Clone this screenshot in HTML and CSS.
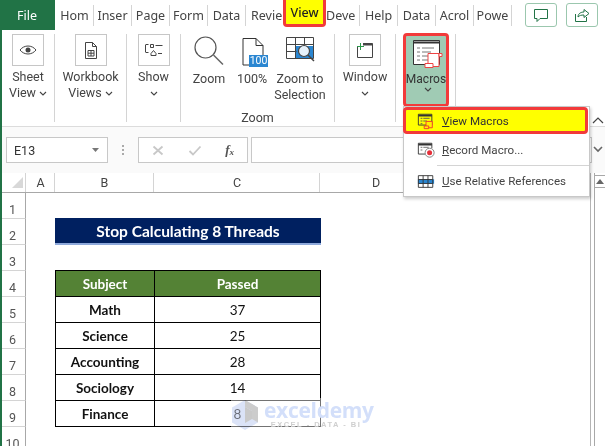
FILE: index.html
```html
<!DOCTYPE html>
<html lang="en">
<head>
<meta charset="utf-8">
<title>Excel View Macros</title>
<link rel="stylesheet" href="styles.css">
</head>
<body>
<svg class="defs" width="0" height="0" aria-hidden="true">
  <symbol id="chev" viewBox="0 0 8 5"><path d="M1 1l3 3 3-3" fill="none" stroke="#444" stroke-width="1.1"/></symbol>
</svg>
<div class="app">
  <header class="tabs">
    <div class="file">File</div>
    <div class="tab">Hom</div>
    <div class="tab">Inser</div>
    <div class="tab">Page</div>
    <div class="tab">Form</div>
    <div class="tab">Data</div>
    <div class="tab tab-clip">Revie</div>
    <div class="tab-view">View</div>
    <div class="tab tab-deve">Deve</div>
    <div class="tab">Help</div>
    <div class="tab">Data</div>
    <div class="tab">Acrol</div>
    <div class="tab tab-last">Powe</div>
    <div class="tab-actions">
      <button class="act"><svg width="16" height="16" viewBox="0 0 16 16"><path d="M1.5 2.5h13v9H7l-3 3v-3H1.5z" fill="none" stroke="#217346"/></svg></button>
      <button class="act"><svg width="18" height="16" viewBox="0 0 18 16"><path d="M2.5 7v7.5h11V10M5 10c0-3.500 3-5 6-5V2.500L16 6.500l-5 4V8c-3 0-4.500.500-6 2z" fill="none" stroke="#217346"/></svg></button>
    </div>
  </header>

  <section class="ribbon">
    <div class="group g-sheet">
      <div class="box"><svg width="18" height="10" viewBox="0 0 18 10"><path d="M1 5c2-2.600 5-4 8-4s6 1.400 8 4c-2 2.600-5 4-8 4S3 7.600 1 5z" fill="none" stroke="#444"/><circle cx="9" cy="5" r="2.500" fill="#444"/></svg></div>
      <div class="lbl">Sheet</div>
      <div class="lbl">View <svg class="chev"><use href="#chev"/></svg></div>
    </div>
    <div class="group g-book">
      <div class="box"><svg width="14" height="17" viewBox="0 0 14 17"><path d="M1.500.500h7l4 4v12h-11zM8.500.500v4h4" fill="none" stroke="#444"/><path d="M4 8.500h6v5.500H4zM7 8.500V14M4 11.200h6" fill="none" stroke="#444"/></svg></div>
      <div class="lbl">Workbook</div>
      <div class="lbl">Views <svg class="chev"><use href="#chev"/></svg></div>
    </div>
    <div class="group g-show">
      <div class="box"><svg width="18" height="12" viewBox="0 0 18 12"><path d="M.5 1v7M.5.500h3M.5 8.500h3M5.500.500h3v3h-3zM10.500 1.500h7M6 9.500l2.500-3 2.500 3v2H6zM13 9.500h4" fill="none" stroke="#444"/></svg></div>
      <div class="lbl">Show</div>
      <div class="lbl"><svg class="chev"><use href="#chev"/></svg></div>
    </div>
    <div class="group g-zoom">
      <div class="zoom-row">
        <div class="zbtn z1">
          <svg class="zicon" width="32" height="34" viewBox="0 0 32 34"><circle cx="12.500" cy="13.500" r="10.500" fill="none" stroke="#555" stroke-width="1.200"/><path d="M20.500 21l9.500 9.500" stroke="#666" stroke-width="1.500"/></svg>
          <div class="lbl">Zoom</div>
        </div>
        <div class="zbtn z2">
          <div class="icon100">
            <svg width="22" height="28" viewBox="0 0 22 28"><path d="M1 .5h13l7 7V27H1z" fill="#fff" stroke="#333"/><path d="M14 .5v7h7" fill="none" stroke="#333"/></svg>
            <span class="badge100">100</span>
          </div>
          <div class="lbl">100%</div>
        </div>
        <div class="zbtn z3">
          <svg class="zicon" width="30" height="34" viewBox="0 0 30 34"><rect x="11" y="12" width="18" height="12" fill="#2a86d1"/><path d="M1.500 3.500h27v21h-27zM1.500 10.500h27M1.500 17.500h10M10.500 3.500v21M19.500 3.500v8" fill="none" stroke="#444"/><circle cx="19" cy="17" r="5.500" fill="#e6f1fa" stroke="#444" stroke-width="1.200"/><path d="M23 21l6 6" stroke="#444" stroke-width="1.500"/></svg>
          <div class="lbl">Zoom to</div>
          <div class="lbl">Selection</div>
        </div>
      </div>
      <div class="glabel">Zoom</div>
    </div>
    <div class="group g-window">
      <div class="box"><svg width="18" height="16" viewBox="0 0 18 16"><path d="M1.500 5v10.500h15V1.500H7" fill="none" stroke="#444"/><path d="M7 2.500h9.500" stroke="#444" stroke-width="2"/><path d="M4.500 1v7M1 4.500h7" stroke="#2c9a4b" fill="none"/></svg></div>
      <div class="lbl">Window</div>
      <div class="lbl"><svg class="chev"><use href="#chev"/></svg></div>
    </div>
    <div class="group g-macros">
      <div class="macros">
        <svg width="31" height="30" viewBox="0 0 31 30"><path d="M1.500 1.500h26v24h-26z" fill="#fff" stroke="#333"/><path d="M1.500 3.500h26" stroke="#333" stroke-width="2"/><path d="M5 9h3M10 9h12M5 13h3M10 13h9M5 17h3M10 17h7M5 21h3M10 21h6" stroke="#777"/><path d="M16 14.500h11v13h-11z" fill="#fff" stroke="#ee4444"/><path d="M27 14.500h3v3h-3zM13 24.500h8v4h-8z" fill="#fff" stroke="#ee4444"/></svg>
        <div class="lbl">Macros</div>
        <div class="lbl"><svg class="chev"><use href="#chev"/></svg></div>
      </div>
    </div>
    <svg class="collapse" width="12" height="7" viewBox="0 0 12 7"><path d="M1 6l5-5 5 5" fill="none" stroke="#444" stroke-width="1.200"/></svg>
  </section>

  <section class="fbar">
    <div class="namebox"><span>E13</span><svg width="8" height="4" viewBox="0 0 8 4"><path d="M0 0h7L3.500 4z" fill="#777"/></svg></div>
    <div class="dots"><i></i><i></i><i></i></div>
    <div class="fxbox">
      <svg width="12" height="11" viewBox="0 0 12 11"><path d="M1.500 1.500l9 8M10.500 1.500l-9 8" stroke="#c8c8c8" stroke-width="1.800"/></svg>
      <svg width="14" height="11" viewBox="0 0 14 11"><path d="M1.500 6l3.500 3.500 7.500-8" fill="none" stroke="#c8c8c8" stroke-width="1.800"/></svg>
      <span class="fx">f<sub>x</sub></span>
    </div>
    <div class="finput"></div>
    <svg class="fchev" width="10" height="7" viewBox="0 0 10 7"><path d="M1 1l4 4 4-4" fill="none" stroke="#666" stroke-width="1.600"/></svg>
  </section>

  <section class="sheet-wrap">
    <div class="sheet">
      <div class="corner"><i></i></div>
      <div class="ch">A</div><div class="ch">B</div><div class="ch">C</div><div class="ch">D</div><div class="ch ch-e"></div>

      <div class="rh rh1">1</div><div class="row-fill"></div>
      <div class="rh">2</div><div></div><div class="title">Stop Calculating 8 Threads</div><div class="tail"></div>
      <div class="rh">3</div><div class="row-fill"></div>
      <div class="rh">4</div><div></div><div class="cell head">Subject</div><div class="cell head">Passed</div><div class="tail"></div>
      <div class="rh">5</div><div></div><div class="cell b">Math</div><div class="cell">37</div><div class="tail"></div>
      <div class="rh">6</div><div></div><div class="cell b">Science</div><div class="cell">25</div><div class="tail"></div>
      <div class="rh">7</div><div></div><div class="cell b">Accounting</div><div class="cell">28</div><div class="tail"></div>
      <div class="rh">8</div><div></div><div class="cell b">Sociology</div><div class="cell">14</div><div class="tail"></div>
      <div class="rh">9</div><div></div><div class="cell b">Finance</div><div class="cell">8</div><div class="tail"></div>
      <div class="rh">10</div><div class="row-fill"></div>
    </div>
    <div class="vscroll">
      <div class="vup"><svg width="8" height="5" viewBox="0 0 8 5"><path d="M4 0l4 5H0z" fill="#666"/></svg></div>
    </div>
    <div class="mark">
      <svg class="mark-logo" width="28" height="32" viewBox="0 0 28 32"><path d="M14 1l13 7.500v15L14 31 1 23.500v-15z" fill="#dbe3f7"/><path d="M14 8l7 4v8l-7 4z" fill="#c9c9c9"/><path d="M14 1l13 7.500v15l-6-3.500v-8l-7-4z" fill="#cccccc"/></svg>
      <div class="mark-text">
        <div class="mark-name">exceldemy</div>
        <div class="mark-sub">EXCEL - DATA - BI</div>
      </div>
    </div>
  </section>

  <nav class="menu">
    <div class="mi mi-on">
      <svg width="20" height="18" viewBox="0 0 20 18"><path d="M1.500 1.500h15v12h-15z" fill="none" stroke="#333"/><path d="M1.500 3h15" stroke="#333" stroke-width="2"/><path d="M4 6h2M7 6h7M4 9h2M7 9h4M4 12h2" stroke="#555"/><path d="M10 9.500h7v7h-7z" fill="#fff200" stroke="#e33"/><path d="M8 14.500h5v3H8z" fill="#fff200" stroke="#e33"/></svg>
      <span><u>V</u>iew Macros</span>
    </div>
    <div class="mi">
      <svg width="20" height="18" viewBox="0 0 20 18"><path d="M9 13.500H1.500v-12h15V7" fill="none" stroke="#333"/><path d="M1.500 3h15" stroke="#333" stroke-width="2"/><path d="M4 6h2M4 9h2M7 6h6" stroke="#666"/><circle cx="14" cy="12" r="5" fill="#fff" stroke="#777"/><circle cx="14" cy="12" r="2.800" fill="#e5303a"/></svg>
      <span><u>R</u>ecord Macro...</span>
    </div>
    <div class="msep"></div>
    <div class="mi">
      <svg width="20" height="15" viewBox="0 0 20 15"><rect x="1" y="5" width="18" height="5" fill="#2a86d1"/><path d="M1.500 1h16v13h-16zM1.500 5.300h16M1.500 9.700h16M6.800 1v13M12.200 1v13" fill="none" stroke="#333"/></svg>
      <span><u>U</u>se Relative References</span>
    </div>
  </nav>
</div>
</body>
</html>
```
FILE: styles.css
```css
* { box-sizing: border-box; }
html, body { margin: 0; padding: 0; }
body { width: 605px; height: 446px; overflow: hidden; background: #fff; font-family: "Roboto", "Noto Sans", sans-serif; color: #444; }
.defs { position: absolute; }
.app { position: relative; width: 605px; height: 446px; overflow: hidden; border-left: 2px solid #217346; display: flex; flex-direction: column; }

.tabs { height: 30px; display: flex; align-items: flex-start; font-family: "Noto Sans", sans-serif; font-size: 12.5px; flex: none; }
.file { width: 53px; height: 30px; margin-right: 1px; background: #217346; color: #fff; display: flex; align-items: center; justify-content: center; padding-right: 3px; }
.tab { width: 38px; height: 21px; margin-top: 5px; line-height: 21px; text-align: center; white-space: nowrap; overflow: hidden; border-right: 1px solid #d4d4d4; }
.tab-clip { width: 37px; border-right: 0; text-align: left; padding-left: 5px; }
.tab-deve { width: 34px; text-align: left; }
.tab-last { width: 38px; }
.tab-view { width: 43px; height: 27px; background: #ff0; border: 3px solid #f23a3a; border-top: 0; border-radius: 0 0 4px 4px; line-height: 26px; text-align: center; color: #222; font-weight: 500; }
.tab-actions { margin-left: 13px; margin-top: 3px; display: flex; gap: 9px; }
.act { width: 32px; height: 24px; padding: 0; background: #fff; border: 1px solid #9bc7ae; border-radius: 3px; display: flex; align-items: center; justify-content: center; }

.ribbon { position: relative; height: 97px; flex: none; padding-top: 4px; display: flex; align-items: flex-start; border-bottom: 1px solid #dcdcdc; font-size: 12.5px; }
.group { height: 88px; border-right: 1px solid #d4d4d4; display: flex; flex-direction: column; align-items: center; flex: none; }
.g-sheet { width: 53px; }
.g-book { width: 72px; }
.g-show { width: 54px; }
.g-zoom { width: 154px; position: relative; }
.g-window { width: 61px; }
.g-macros { width: 60px; padding-left: 7px; align-items: flex-start; }
.box { width: 32px; height: 32px; border: 1px solid #c6c6c6; display: flex; align-items: center; justify-content: center; margin-bottom: 3px; }
.lbl { height: 16px; line-height: 16px; white-space: nowrap; text-align: center; }
.chev { width: 8px; height: 5px; vertical-align: 1px; }
.zoom-row { display: flex; align-items: flex-start; width: 100%; }
.zbtn { display: flex; flex-direction: column; align-items: center; flex: none; }
.z1 { width: 56px; }
.z2 { width: 30px; }
.z3 { width: 66px; }
.zicon { margin-bottom: 3px; display: block; }
.icon100 { position: relative; flex: none; width: 28px; height: 34px; margin-bottom: 3px; padding: 4px 0 0 4px; }
.icon100 svg { display: block; }
.badge100 { position: absolute; left: 11px; top: 21px; width: 19px; height: 12px; background: #2a86d1; color: #fff; font-size: 10.5px; line-height: 12px; text-align: center; }
.glabel { margin-top: auto; height: 14px; line-height: 14px; margin-bottom: -3px; }
.macros { width: 46px; height: 74px; margin-top: -1px; background: #a0cbb4; border: 3px solid #f23a3a; border-radius: 4px; display: flex; flex-direction: column; align-items: center; padding-top: 3px; color: #333; font-size: 12px; }
.macros svg:first-child { margin: 0 0 2px 3px; display: block; flex: none; }
.collapse { position: absolute; left: 590px; top: 87px; }

.fbar { height: 46px; flex: none; background: #fafafa; display: flex; align-items: flex-start; padding: 10px 0 0 4px; position: relative; font-size: 12.5px; }
.namebox { width: 102px; height: 26px; background: #fff; border: 1px solid #c8c8c8; display: flex; align-items: center; justify-content: space-between; padding: 0 7px 0 7px; color: #333; }
.dots { width: 30px; height: 26px; display: flex; flex-direction: column; align-items: center; justify-content: center; gap: 2px; }
.dots i { width: 2px; height: 2px; background: #aaa; }
.fxbox { width: 110px; height: 26px; background: #fff; border: 1px solid #c8c8c8; display: flex; align-items: center; justify-content: space-between; padding: 0 13px 0 13px; }
.fx { font-family: "Liberation Serif", serif; font-style: italic; font-weight: 700; font-size: 13px; color: #555; line-height: 14px; }
.fx sub { font-size: 9px; vertical-align: -1px; line-height: 0; }
.finput { width: 341px; height: 26px; margin-left: 3px; background: #fff; border: 1px solid #c8c8c8; }
.fchev { position: absolute; left: 591px; top: 19px; }

.sheet-wrap { position: relative; flex: 1; display: flex; min-height: 0; }
.sheet { width: 589px; flex: none; display: grid; grid-template-columns: 24px 29px 99px 166px 112px 1fr; grid-template-rows: 19px repeat(10, 26px); border-right: 1px solid #b4b4b4; font-size: 12.5px; }
.corner { position: relative; border-right: 1px solid #d4d4d4; }
.corner i { display: block; width: 11px; height: 11px; margin: 4px 0 0 10px; background: #d8d8d8; clip-path: polygon(100% 0, 100% 100%, 0 100%); }
.ch { text-align: center; line-height: 19px; padding-left: 1px; border-right: 1px solid #d4d4d4; color: #444; }
.ch-e { border-right: 0; }
.rh { border-top: 1px solid #d4d4d4; border-right: 1px solid #a8a8a8; text-align: center; line-height: 33px; color: #555; padding-right: 2px; font-size: 12.5px; }
.rh1 { border-top-color: #a8a8a8; }
.row-fill { grid-column: 2 / -1; }
.rh1 + .row-fill { border-top: 1px solid #a8a8a8; }
.tail { grid-column: 5 / -1; }
.title { grid-column: 3 / 5; margin-right: -1px; margin-bottom: -1px; background: #002060; border-bottom: 2px solid #8ea9db; color: #fff; font-family: "Lato", sans-serif; font-weight: 700; font-size: 15.5px; line-height: 27px; text-align: center; }
.cell { margin: 0 -1px -1px 0; border: 1px solid #000; text-align: center; line-height: 27px; font-family: "Lato", sans-serif; font-size: 13.5px; color: #111; background: #fff; }
.b { font-weight: 700; }
.head { background: #548235; color: #fff; font-weight: 700; }

.vscroll { margin-left: 3px; flex: 1; border-left: 1px solid #a8a8a8; padding-top: 2px; }
.vup { height: 13px; border-top: 1px solid #a8a8a8; border-bottom: 1px solid #a8a8a8; display: flex; align-items: center; justify-content: center; }

.mark { position: absolute; left: 229px; top: 225px; width: 145px; height: 34px; display: flex; align-items: flex-start; gap: 5px; padding-top: 1px; background: rgba(255, 255, 255, 0.45); }
.mark-logo { flex: none; mix-blend-mode: multiply; }
.mark-text { display: flex; flex-direction: column; flex: none; width: 110px; }
.mark-name { font-family: "Open Sans", sans-serif; font-weight: 700; font-size: 21px; line-height: 22px; letter-spacing: -0.3px; color: #d3dffa; white-space: nowrap; }
.mark-sub { font-family: "Liberation Sans", sans-serif; font-weight: 700; font-size: 7.5px; line-height: 8px; letter-spacing: 1.5px; padding-right: 6px; color: #cfcfcf; text-align: center; white-space: nowrap; }

.menu { position: absolute; left: 401px; top: 106px; width: 187px; height: 91px; background: #fff; border: 1px solid #c8c8c8; box-shadow: 1px 2px 3px rgba(0, 0, 0, 0.2); font-size: 11.6px; }
.mi { height: 28px; display: flex; align-items: center; padding-left: 13px; gap: 7px; }
.mi svg { flex: none; width: 18px; }
.mi span { white-space: nowrap; }
.mi-on { height: 27px; margin: 0 0 2px -1px; width: 185px; background: #ff0; border: 3px solid #f23a3a; border-radius: 4px; padding-left: 11px; color: #333; }
.mi-on span { padding-top: 1px; }
.msep { height: 1px; margin: 1px 0 1px 33px; background: #d4d4d4; }
```
